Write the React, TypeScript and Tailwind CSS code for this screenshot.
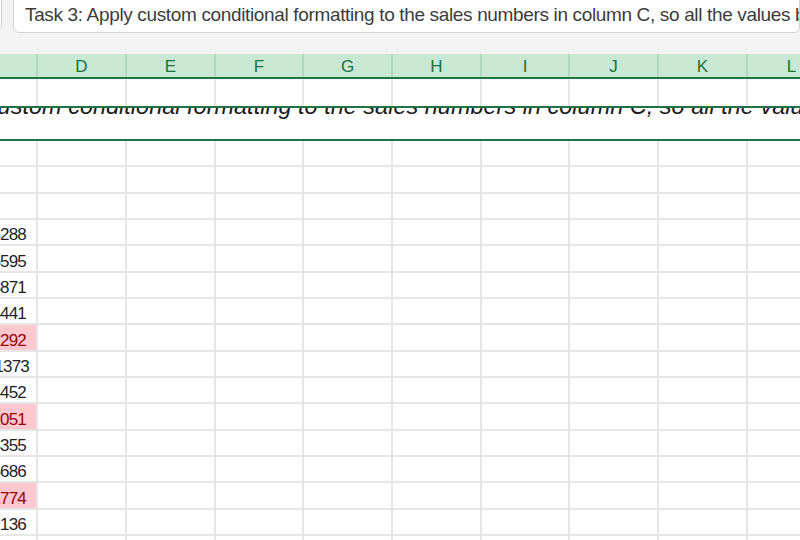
import React from "react";

const COLS = ["", "D", "E", "F", "G", "H", "I", "J", "K", "L"];
const WIDTHS = ["w-[38px]", "w-[89px]", "w-[89px]", "w-[88px]", "w-[89px]", "w-[89px]", "w-[88px]", "w-[89px]", "w-[89px]", "w-[89px]"];

type Cell = { value: string; bad?: boolean; pr?: string };

const ROWS: Cell[] = [
  { value: "" },
  { value: "" },
  { value: "" },
  { value: "5288" },
  { value: "6595" },
  { value: "3871" },
  { value: "4441" },
  { value: "1292", bad: true },
  { value: "1373", pr: "pr-[7px]" },
  { value: "4452" },
  { value: "1051", bad: true },
  { value: "3355" },
  { value: "5686" },
  { value: "1774", bad: true },
  { value: "2136" },
  { value: "" },
];

const TASK =
  "Task 3: Apply custom conditional formatting to the sales numbers in column C, so all the values below 2,000 are highlighted in red";

function GridRow({ cell }: { cell: Cell }) {
  return (
    <div className="flex h-[26.33px] shrink-0 border-b-2 border-[#e6e6e6]">
      {WIDTHS.map((w, i) => (
        <div
          key={i}
          className={`${w} shrink-0 border-r-2 border-[#e6e6e6] ${
            i === 0 && cell.bad ? "bg-[#ffc7ce]" : ""
          } flex items-end justify-end overflow-hidden`}
        >
          {i === 0 && cell.value ? (
            <span
              className={`whitespace-nowrap text-[17px] tracking-[-0.8px] leading-[17px] pb-[1px] ${
                cell.pr ?? "pr-[10px]"
              } ${cell.bad ? "text-[#9c0006]" : "text-[#1f1f1f]"}`}
            >
              {cell.value}
            </span>
          ) : null}
        </div>
      ))}
    </div>
  );
}

export default function App() {
  return (
    <div
      className="w-[800px] h-[540px] overflow-hidden bg-white flex flex-col"
      style={{ fontFamily: '"Liberation Sans", Arial, sans-serif' }}
    >
      {/* formula bar */}
      <div className="h-[54px] shrink-0 bg-[#f3f3f3] flex items-start overflow-hidden">
        <div className="w-[12px] h-[40px] -mt-[8px] -ml-[10px] shrink-0 rounded-[6px] border border-[#d2d2d2] bg-white" />
        <div className="ml-[11px] h-[41px] -mt-[8px] flex-1 min-w-0 rounded-[6px] border border-[#d2d2d2] bg-white flex items-end pb-[8px] pl-[11px] overflow-hidden">
          <span className="whitespace-nowrap text-[19px] tracking-[-0.35px] leading-none text-[#3c3c3c]">{TASK}</span>
        </div>
      </div>

      {/* column headers */}
      <div className="flex h-[23px] shrink-0 bg-[#c8e8d3]">
        {COLS.map((c, i) => (
          <div
            key={i}
            className={`${WIDTHS[i]} shrink-0 border-r-2 border-[#b0dbc0] flex items-center justify-center pt-[2px] text-[17px] leading-none text-[#1e6f42]`}
          >
            {c}
          </div>
        ))}
      </div>
      <div className="h-[2px] shrink-0 bg-[#217346]" />

      {/* row 1 */}
      <div className="flex h-[27px] shrink-0">
        {WIDTHS.map((w, i) => (
          <div key={i} className={`${w} shrink-0 border-r-2 border-[#e6e6e6]`} />
        ))}
      </div>

      {/* merged title cell */}
      <div className="h-[2px] shrink-0 bg-[#217346]" />
      <div className="h-[31px] shrink-0 overflow-hidden">
        <div className="-mt-[13px] -ml-[160px] whitespace-nowrap italic text-[23.5px] leading-[23.5px] text-[#1a1a1a]">
          {TASK}
        </div>
      </div>
      <div className="h-[2px] shrink-0 bg-[#217346]" />

      {/* data rows */}
      {ROWS.map((r, i) => (
        <GridRow key={i} cell={r} />
      ))}
    </div>
  );
}
